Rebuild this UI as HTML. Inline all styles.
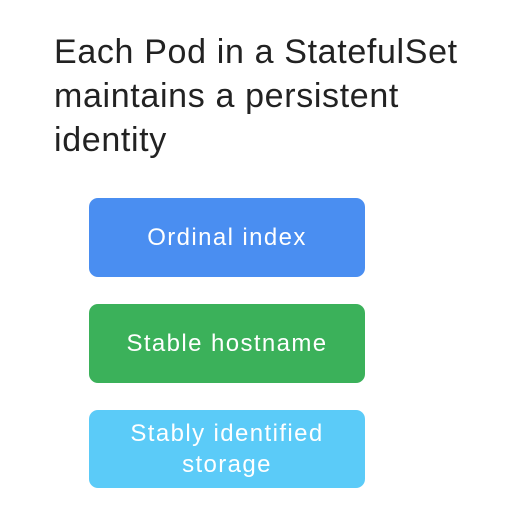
<!DOCTYPE html>
<html><head><meta charset="utf-8"><style>
html,body{margin:0;padding:0;background:#fff;}
body{width:520px;height:514px;position:relative;overflow:hidden;font-family:"Liberation Sans",sans-serif;}
.t{position:absolute;left:54px;top:30px;font-size:34px;line-height:44px;color:#222;letter-spacing:0.65px;}
.b{position:absolute;left:89px;width:276px;border-radius:9px;color:#fff;font-size:24px;letter-spacing:1.4px;display:flex;align-items:center;justify-content:center;text-align:center;line-height:31px;}
</style></head><body>
<div class="t">Each Pod in a StatefulSet<br>maintains a persistent<br>identity</div>
<div class="b" style="top:198px;height:79px;background:#4a8ef1;">Ordinal index</div>
<div class="b" style="top:304px;height:79px;background:#3bb15a;">Stable hostname</div>
<div class="b" style="top:410px;height:78px;background:#5bcbf8;">Stably identified<br>storage</div>
</body></html>
